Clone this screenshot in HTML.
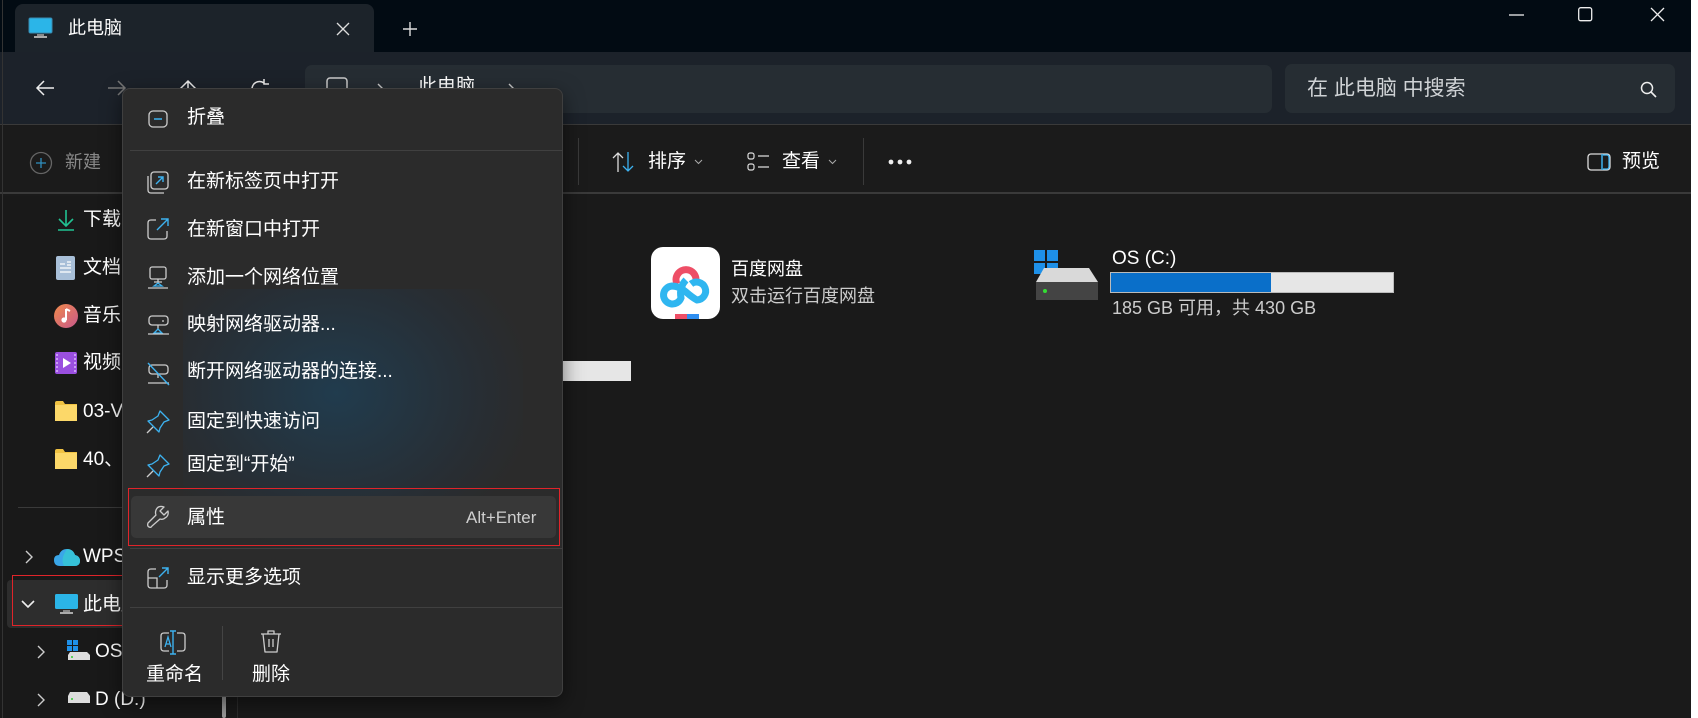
<!DOCTYPE html>
<html><head><meta charset="utf-8"><style>
*{margin:0;padding:0;box-sizing:border-box}
body{width:1698px;height:718px;overflow:hidden;background:#fff;font-family:"Liberation Sans","Noto Sans CJK SC",sans-serif;color:#fff;position:relative}
.a{position:absolute}
.t{position:absolute;white-space:nowrap;line-height:1}
svg{position:absolute;overflow:visible}
.m{font-size:19px}
</style></head><body>
<div class="a" style="left:0;top:0;width:1691px;height:718px;background:#1a1a1a"></div>
<!-- title bar -->
<div class="a" style="left:0;top:0;width:1691px;height:52px;background:#020b13"></div>
<div class="a" style="left:15px;top:4px;width:359px;height:50px;background:#1c232a;border-radius:8px 8px 0 0"></div>
<svg style="left:29px;top:18px" width="24" height="22"><rect x="0" y="0" width="23" height="15" rx="1.5" fill="#2bb5e8"/><rect x="0" y="0" width="23" height="15" rx="1.5" fill="none" stroke="#3a8bb0"/><rect x="8" y="16" width="7" height="2" fill="#888"/><rect x="5" y="18" width="13" height="2" fill="#aaa"/></svg>
<div class="t" style="left:68px;top:19px;font-size:18px">此电脑</div>
<svg style="left:336px;top:22px" width="14" height="14"><path d="M1 1L13 13M13 1L1 13" stroke="#ddd" stroke-width="1.3"/></svg>
<svg style="left:402px;top:21px" width="16" height="16"><path d="M8 1V15M1 8H15" stroke="#ddd" stroke-width="1.4"/></svg>
<svg style="left:1509px;top:14px" width="16" height="2"><path d="M0 1H15" stroke="#eee" stroke-width="1.3"/></svg>
<svg style="left:1578px;top:7px" width="15" height="15"><rect x="0.7" y="0.7" width="13" height="13" rx="2" fill="none" stroke="#eee" stroke-width="1.3"/></svg>
<svg style="left:1650px;top:7px" width="15" height="15"><path d="M1 1L14 14M14 1L1 14" stroke="#eee" stroke-width="1.3"/></svg>
<!-- nav row -->
<div class="a" style="left:0;top:52px;width:1691px;height:73px;background:#1c222a;border-bottom:1px solid #3a3a3a"></div>
<svg style="left:35px;top:80px" width="20" height="16"><path d="M19 8H2M9 1L2 8L9 15" fill="none" stroke="#eee" stroke-width="1.5"/></svg>
<svg style="left:107px;top:80px" width="20" height="16"><path d="M1 8H18M11 1L18 8L11 15" fill="none" stroke="#777" stroke-width="1.5"/></svg>
<svg style="left:178px;top:79px" width="20" height="18"><path d="M10 18V2M2 10L10 2L18 10" fill="none" stroke="#eee" stroke-width="1.5"/></svg>
<svg style="left:250px;top:79px" width="20" height="18"><path d="M17 10A7.5 7.5 0 1 1 14 4M14 0V5H19" fill="none" stroke="#eee" stroke-width="1.5"/></svg>
<div class="a" style="left:305px;top:65px;width:967px;height:48px;background:#262d33;border-radius:7px"></div>
<svg style="left:326px;top:77px" width="22" height="20"><rect x="1" y="1" width="20" height="19" rx="3" fill="none" stroke="#ccc" stroke-width="1.5"/></svg>
<svg style="left:377px;top:83px" width="8" height="10"><path d="M1 1L6 6" fill="none" stroke="#ccc" stroke-width="1.4"/></svg>
<div class="t" style="left:418px;top:77px;font-size:19px">此电脑</div>
<svg style="left:508px;top:83px" width="8" height="10"><path d="M1 1L6 6" fill="none" stroke="#ccc" stroke-width="1.4"/></svg>
<div class="a" style="left:1285px;top:64px;width:390px;height:49px;background:#262d33;border-radius:7px"></div>
<div class="t" style="left:1307px;top:78px;font-size:21px;color:#cfd2d5">在 此电脑 中搜索</div>
<svg style="left:1640px;top:81px" width="17" height="17"><circle cx="7" cy="7" r="5.5" fill="none" stroke="#eee" stroke-width="1.5"/><path d="M11 11L16 16" stroke="#eee" stroke-width="1.6"/></svg>
<!-- toolbar -->
<div class="a" style="left:0;top:126px;width:1691px;height:68px;background:#1b1b1b;border-bottom:2px solid #3a3a3a"></div>
<svg style="left:29px;top:151px" width="24" height="24"><circle cx="12" cy="12" r="10.5" fill="none" stroke="#666" stroke-width="1.3"/><path d="M12 7V17M7 12H17" stroke="#2f8fbf" stroke-width="1.3"/></svg>
<div class="t" style="left:65px;top:153px;font-size:18px;color:#888">新建</div>
<div class="a" style="left:578px;top:138px;width:1px;height:47px;background:#3a3a3a"></div>
<div class="a" style="left:863px;top:138px;width:1px;height:47px;background:#3a3a3a"></div>
<svg style="left:612px;top:151px" width="22" height="22"><path d="M6 21V2M1 7L6 2L11 7" fill="none" stroke="#ddd" stroke-width="1.3"/><path d="M16 1V20M11 15L16 20L21 15" fill="none" stroke="#3db2f0" stroke-width="1.3"/></svg>
<div class="t" style="left:648px;top:152px;font-size:19px">排序</div>
<svg style="left:694px;top:159px" width="9" height="6"><path d="M1 1L4.5 4.5L8 1" fill="none" stroke="#aaa"/></svg>
<svg style="left:747px;top:152px" width="24" height="20"><rect x="1" y="1" width="6" height="6" rx="2" fill="none" stroke="#ddd" stroke-width="1.2"/><rect x="1" y="12" width="6" height="6" rx="2" fill="none" stroke="#ddd" stroke-width="1.2"/><path d="M11 4H22M11 15H22" stroke="#ddd" stroke-width="1.3"/></svg>
<div class="t" style="left:782px;top:152px;font-size:19px">查看</div>
<svg style="left:828px;top:159px" width="9" height="6"><path d="M1 1L4.5 4.5L8 1" fill="none" stroke="#aaa"/></svg>
<svg style="left:888px;top:159px" width="26" height="6"><circle cx="3" cy="3" r="2.4" fill="#eee"/><circle cx="12" cy="3" r="2.4" fill="#eee"/><circle cx="21" cy="3" r="2.4" fill="#eee"/></svg>
<svg style="left:1587px;top:153px" width="24" height="18"><rect x="1" y="1" width="22" height="16" rx="3" fill="none" stroke="#ddd" stroke-width="1.3"/><path d="M15 1V17" stroke="#3db2f0" stroke-width="1.5"/><path d="M16 2H20Q22 2 22 5V13Q22 16 20 16H16" fill="none" stroke="#3db2f0" stroke-width="1.3"/></svg>
<div class="t" style="left:1622px;top:152px;font-size:19px">预览</div>
<!-- sidebar -->
<div class="a" style="left:0;top:196px;width:238px;height:522px;background:#191919;border-right:1px solid #2c2c2c"></div>
<div class="a" style="left:2px;top:0;width:1px;height:718px;background:#333"></div>
<svg style="left:57px;top:209px" width="18" height="22"><path d="M9 1V17M2 10L9 17L16 10M1 21H17" fill="none" stroke="#21c292" stroke-width="1.6"/></svg>
<div class="t" style="left:83px;top:210px;font-size:19px">下载</div>
<svg style="left:56px;top:256px" width="19" height="24"><rect x="0" y="0" width="19" height="24" rx="2" fill="#a8bfd8"/><path d="M4 8H9M4 12H15M4 16H15M11 6H15M11 9H15" stroke="#fff" stroke-width="1.3"/></svg>
<div class="t" style="left:83px;top:258px;font-size:19px">文档</div>
<svg style="left:54px;top:304px" width="24" height="24"><defs><linearGradient id="mg" x1="0" y1="0" x2="1" y2="1"><stop offset="0" stop-color="#f08a4b"/><stop offset="1" stop-color="#c7588c"/></linearGradient></defs><circle cx="12" cy="12" r="12" fill="url(#mg)"/><path d="M12 5V16" stroke="#fff" stroke-width="2"/><circle cx="10" cy="16" r="2.6" fill="#fff"/><path d="M12 5L16 7" stroke="#fff" stroke-width="2"/></svg>
<div class="t" style="left:83px;top:306px;font-size:19px">音乐</div>
<svg style="left:55px;top:352px" width="22" height="22"><rect width="22" height="22" rx="2" fill="#9a4fe0"/><path d="M2 2V20M20 2V20" stroke="#c99cf5" stroke-width="2" stroke-dasharray="2 2"/><path d="M8 6L16 11L8 16Z" fill="#fff"/></svg>
<div class="t" style="left:83px;top:353px;font-size:19px">视频</div>
<svg style="left:55px;top:401px" width="22" height="20"><path d="M0 2Q0 0 2 0H8L10 3H22V20H0Z" fill="#f0c242"/><rect x="0" y="4" width="22" height="16" fill="#fcd869"/></svg>
<div class="t" style="left:83px;top:402px;font-size:19px">03-V</div>
<svg style="left:55px;top:449px" width="22" height="20"><path d="M0 2Q0 0 2 0H8L10 3H22V20H0Z" fill="#f0c242"/><rect x="0" y="4" width="22" height="16" fill="#fcd869"/></svg>
<div class="t" style="left:83px;top:450px;font-size:19px">40、</div>
<div class="a" style="left:18px;top:507px;width:220px;height:1px;background:#3a3a3a"></div>
<svg style="left:25px;top:550px" width="8" height="14"><path d="M1 1L7 7L1 13" fill="none" stroke="#ccc" stroke-width="1.4"/></svg>
<svg style="left:54px;top:547px" width="26" height="20"><path d="M6 19Q0 19 0 13Q0 8 5 8Q7 2 13 2Q19 2 21 8Q26 9 26 14Q26 19 20 19Z" fill="#3aa6e8"/><path d="M10 19Q6 12 13 2Q19 2 21 8Q26 9 26 14Q26 19 20 19Z" fill="#36c1d8"/></svg>
<div class="t" style="left:83px;top:547px;font-size:19px">WPS</div>
<div class="a" style="left:7px;top:580px;width:231px;height:48px;background:#2d2d2d;border-radius:4px"></div>
<div class="a" style="left:12px;top:575px;width:125px;height:51px;border:1.5px solid #e0242a"></div>
<svg style="left:21px;top:600px" width="14" height="9"><path d="M1 1L7 7L13 1" fill="none" stroke="#eee" stroke-width="1.6"/></svg>
<svg style="left:55px;top:594px" width="24" height="22"><rect x="0" y="0" width="23" height="15" rx="1.5" fill="#2bb5e8"/><rect x="8" y="16" width="7" height="2" fill="#888"/><rect x="5" y="18" width="13" height="2" fill="#aaa"/></svg>
<div class="t" style="left:83px;top:595px;font-size:19px">此电脑</div>
<svg style="left:37px;top:645px" width="8" height="14"><path d="M1 1L7 7L1 13" fill="none" stroke="#ccc" stroke-width="1.4"/></svg>
<svg style="left:67px;top:640px" width="24" height="22"><rect x="0" y="0" width="5" height="5" fill="#1e90e8"/><rect x="6" y="0" width="5" height="5" fill="#1e90e8"/><rect x="0" y="6" width="5" height="5" fill="#1e90e8"/><rect x="6" y="6" width="5" height="5" fill="#1e90e8"/><path d="M3 12H20L23 15V20H1V15Z" fill="#ddd"/><circle cx="5" cy="17" r="1" fill="#3c3"/></svg>
<div class="t" style="left:95px;top:642px;font-size:19px">OS</div>
<svg style="left:37px;top:693px" width="8" height="14"><path d="M1 1L7 7L1 13" fill="none" stroke="#ccc" stroke-width="1.4"/></svg>
<svg style="left:67px;top:692px" width="24" height="12"><path d="M3 0H20L23 4V11H1V4Z" fill="#ddd"/><circle cx="5" cy="7" r="1" fill="#3c3"/></svg>
<div class="t" style="left:95px;top:690px;font-size:19px">D (D:)</div>
<div class="a" style="left:222px;top:690px;width:4px;height:28px;background:#9a9a9a;border-radius:2px"></div>
<!-- content -->
<div class="a" style="left:563px;top:361px;width:68px;height:20px;background:#e6e6e6"></div>
<div class="a" style="left:651px;top:247px;width:69px;height:72px;background:#fff;border-radius:12px"></div>
<svg style="left:659px;top:262px" width="54" height="57"><path d="M18 22A10 10 0 1 1 36 22" fill="none" stroke="#ee4e66" stroke-width="7"/><path d="M27 18Q20 25 22 36A9 9 0 1 1 13 24Q20 24 27 30Q34 36 38 38A9 9 0 1 0 32 22" fill="none" stroke="#2fb6f0" stroke-width="7"/><rect x="16" y="52" width="12" height="5" fill="#ee4e66"/><rect x="28" y="52" width="12" height="5" fill="#2e8ef0"/></svg>
<div class="t" style="left:731px;top:260px;font-size:18px">百度网盘</div>
<div class="t" style="left:731px;top:287px;font-size:18px;color:#ccc">双击运行百度网盘</div>
<svg style="left:1034px;top:250px" width="68" height="52"><rect x="0" y="0" width="11" height="11" fill="#1e90e8"/><rect x="13" y="0" width="11" height="11" fill="#1e90e8"/><rect x="0" y="13" width="11" height="11" fill="#1e90e8"/><rect x="13" y="13" width="11" height="11" fill="#1e90e8"/><path d="M10 18H55L64 32V50H2V32Z" fill="#d9d9d9"/><rect x="2" y="32" width="62" height="18" fill="#444"/><circle cx="11" cy="41" r="2" fill="#3d3"/></svg>
<div class="t" style="left:1112px;top:249px;font-size:19px">OS (C:)</div>
<div class="a" style="left:1110px;top:272px;width:284px;height:21px;background:#e6e6e6;border:1px solid #bbb"></div>
<div class="a" style="left:1111px;top:273px;width:160px;height:19px;background:#0a6fc9"></div>
<div class="t" style="left:1112px;top:299px;font-size:18px;color:#ccc">185 GB 可用，共 430 GB</div>
<!-- context menu -->
<div class="a" style="left:122px;top:88px;width:441px;height:609px;background:#2b2b2b;border:1px solid #3f3f3f;border-radius:8px;overflow:hidden;box-shadow:0 6px 20px rgba(0,0,0,.5)">
<div class="a" style="left:60px;top:200px;width:340px;height:260px;background:radial-gradient(ellipse at 45% 40%,rgba(20,80,120,.45),rgba(20,60,100,.15) 55%,rgba(0,0,0,0) 75%)"></div>
</div>
<svg style="left:148px;top:110px" width="20" height="18"><rect x="1" y="1" width="18" height="16" rx="4" fill="none" stroke="#ccc" stroke-width="1.3"/><path d="M6 9H14" stroke="#3db2f0" stroke-width="1.5"/></svg>
<div class="t m" style="left:187px;top:108px">折叠</div>
<div class="a" style="left:130px;top:150px;width:433px;height:1px;background:#404040"></div>
<svg style="left:147px;top:171px" width="23" height="23"><rect x="4" y="1" width="17" height="17" rx="3" fill="none" stroke="#ccc" stroke-width="1.3"/><path d="M1 5V19Q1 22 4 22H17" fill="none" stroke="#ccc" stroke-width="1.3"/><path d="M9 13L16 6M11 6H16V11" fill="none" stroke="#3db2f0" stroke-width="1.4"/></svg>
<div class="t m" style="left:187px;top:172px">在新标签页中打开</div>
<svg style="left:147px;top:218px" width="23" height="23"><path d="M9 2H4Q1 2 1 5V18Q1 21 4 21H17Q20 21 20 18V13" fill="none" stroke="#ccc" stroke-width="1.3"/><path d="M10 12L21 1M14 1H21V8" fill="none" stroke="#3db2f0" stroke-width="1.4"/></svg>
<div class="t m" style="left:187px;top:220px">在新窗口中打开</div>
<svg style="left:147px;top:266px" width="23" height="24"><rect x="3" y="1" width="16" height="12" rx="2" fill="none" stroke="#ccc" stroke-width="1.3"/><path d="M7 16H15M11 13V18" stroke="#ccc" stroke-width="1.3"/><path d="M7 20L11 17L15 20Z" fill="none" stroke="#3db2f0" stroke-width="1.3"/><path d="M1 22H21" stroke="#ccc" stroke-width="1.3"/></svg>
<div class="t m" style="left:187px;top:268px">添加一个网络位置</div>
<svg style="left:147px;top:315px" width="23" height="22"><rect x="2" y="1" width="19" height="9" rx="3" fill="none" stroke="#ccc" stroke-width="1.3"/><path d="M15 6H17M11 10V14" stroke="#ccc" stroke-width="1.3"/><path d="M7 18L11 14L15 18Z" fill="none" stroke="#3db2f0" stroke-width="1.3"/><path d="M1 19H22" stroke="#ccc" stroke-width="1.3"/></svg>
<div class="t m" style="left:187px;top:315px">映射网络驱动器...</div>
<svg style="left:147px;top:362px" width="23" height="24"><rect x="2" y="3" width="19" height="9" rx="3" fill="none" stroke="#ccc" stroke-width="1.3"/><path d="M11 12V16M1 21H22" stroke="#ccc" stroke-width="1.3"/><path d="M1 1L22 23" stroke="#3db2f0" stroke-width="1.4"/></svg>
<div class="t m" style="left:187px;top:362px">断开网络驱动器的连接...</div>
<svg style="left:146px;top:410px" width="24" height="24"><path d="M14 1L23 10L18 12L14 18L13 22L2 11L6 10L12 6Z" fill="none" stroke="#3db2f0" stroke-width="1.3" stroke-linejoin="round"/><path d="M7 17L1 23" stroke="#ccc" stroke-width="1.3"/></svg>
<div class="t m" style="left:187px;top:412px">固定到快速访问</div>
<svg style="left:146px;top:454px" width="24" height="24"><path d="M14 1L23 10L18 12L14 18L13 22L2 11L6 10L12 6Z" fill="none" stroke="#3db2f0" stroke-width="1.3" stroke-linejoin="round"/><path d="M7 17L1 23" stroke="#ccc" stroke-width="1.3"/></svg>
<div class="t m" style="left:187px;top:455px">固定到“开始”</div>
<div class="a" style="left:131px;top:496px;width:425px;height:42px;background:#383838;border-radius:5px"></div>
<div class="a" style="left:128px;top:488px;width:432px;height:58px;border:1.5px solid #e0242a"></div>
<svg style="left:146px;top:505px" width="24" height="24"><path d="M22 6L18 10L14 6L18 2Q12 0 10 5Q9 8 10 10L2 18Q1 21 3 22Q5 23 6 21L14 14Q17 15 19 13Q23 11 22 6Z" fill="none" stroke="#ccc" stroke-width="1.3" stroke-linejoin="round"/></svg>
<div class="t m" style="left:187px;top:508px">属性</div>
<div class="t" style="left:466px;top:509px;font-size:17px;color:#cfcfcf">Alt+Enter</div>
<div class="a" style="left:130px;top:548px;width:433px;height:1px;background:#404040"></div>
<svg style="left:147px;top:567px" width="23" height="23"><path d="M9 2H4Q1 2 1 5V18Q1 21 4 21H17Q20 21 20 18V13" fill="none" stroke="#ccc" stroke-width="1.3"/><path d="M1 11H10V21" fill="none" stroke="#ccc" stroke-width="1.3"/><path d="M12 10L21 1M15 1H21V7" fill="none" stroke="#3db2f0" stroke-width="1.4"/></svg>
<div class="t m" style="left:187px;top:568px">显示更多选项</div>
<div class="a" style="left:130px;top:607px;width:433px;height:1px;background:#404040"></div>
<svg style="left:160px;top:631px" width="26" height="24"><path d="M9 2H4Q1 2 1 5V17Q1 20 4 20H9M17 2H22Q25 2 25 5V17Q25 20 22 20H17" fill="none" stroke="#ccc" stroke-width="1.3"/><path d="M13 0V23M10 0H16M10 23H16" stroke="#3db2f0" stroke-width="1.4"/><path d="M5 16L8 6L11 16M6 13H10" fill="none" stroke="#3db2f0" stroke-width="1.3"/></svg>
<div class="t m" style="left:146px;top:665px">重命名</div>
<div class="a" style="left:222px;top:626px;width:1px;height:54px;background:#444"></div>
<svg style="left:260px;top:630px" width="22" height="24"><path d="M1 4H21M8 4V1H14V4M3 4L5 22H17L19 4" fill="none" stroke="#ccc" stroke-width="1.3" stroke-linejoin="round"/><path d="M9 9V17M13 9V17" stroke="#ccc" stroke-width="1.3"/></svg>
<div class="t m" style="left:252px;top:665px">删除</div>
</body></html>
